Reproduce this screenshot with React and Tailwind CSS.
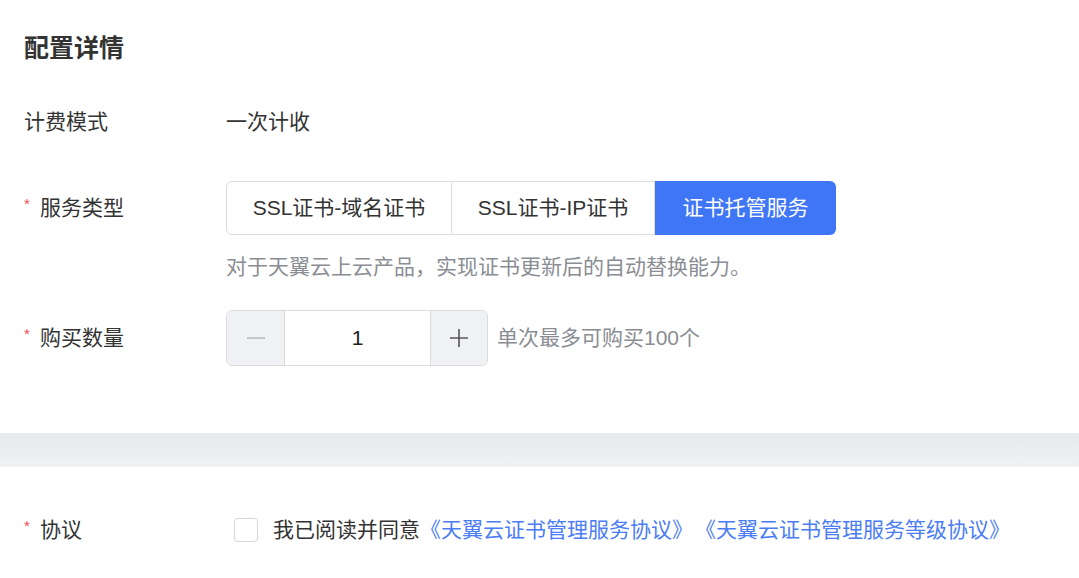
const FONT = { fontFamily: '"Liberation Sans", "Noto Sans CJK SC", sans-serif' };

const services = [
  { name: "SSL证书-域名证书", w: "w-[226px]" },
  { name: "SSL证书-IP证书", w: "w-[203px]" },
  { name: "证书托管服务", w: "w-[181px]" },
];

const Label = ({ required, children }) => (
  <div className="w-[202px] shrink-0 flex items-center text-[21px] text-[#333]">
    {required ? (
      <span className="w-4 text-[#f5484b] text-[15px] -mt-2">*</span>
    ) : null}
    <span>{children}</span>
  </div>
);

export default function App() {
  const selected = 2;

  return (
    <div className="w-[1079px] h-[578px] bg-white overflow-hidden" style={FONT}>
      <div className="px-6 pt-8">
        <h2 className="text-[25px] leading-8 font-bold text-[#333]">配置详情</h2>

        <div className="mt-[31px] h-[54px] flex items-center">
          <Label>计费模式</Label>
          <span className="text-[21px] text-[#333]">一次计收</span>
        </div>

        <div className="mt-8 h-[54px] flex items-center">
          <Label required>服务类型</Label>
          <div className="flex h-[54px]">
            {services.map((s, i) => (
              <button
                key={s.name}
                className={
                  s.w +
                  (i === selected
                    ? " h-full text-[21px] text-white bg-[#3f76f6] rounded-r-md"
                    : i === 0
                    ? " h-full text-[21px] text-[#333] bg-white border border-[#dcdcdc] rounded-l-md"
                    : " h-full text-[21px] text-[#333] bg-white border border-l-0 border-[#dcdcdc]")
                }
              >
                {s.name}
              </button>
            ))}
          </div>
        </div>

        <p className="mt-[18px] ml-[202px] text-[21px] leading-[28px] text-[#8a8d93]">
          对于天翼云上云产品，实现证书更新后的自动替换能力。
        </p>

        <div className="mt-[29px] h-[56px] flex items-center">
          <Label required>购买数量</Label>
          <div className="flex h-[56px] w-[262px] border border-[#dcdcdc] rounded-md overflow-hidden">
            <button className="w-[58px] bg-[#f0f1f4] flex items-center justify-center border-r border-[#dcdcdc]">
              <svg width="20" height="20" viewBox="0 0 20 20">
                <path d="M1 10h18" stroke="#b4b7bd" strokeWidth="1.6" />
              </svg>
            </button>
            <div className="flex-1 flex items-center justify-center text-[21px] text-[#222] bg-white">1</div>
            <button className="w-[57px] bg-[#f0f1f4] flex items-center justify-center border-l border-[#dcdcdc]">
              <svg width="20" height="20" viewBox="0 0 20 20">
                <path d="M1 10h18M10 1v18" stroke="#555" strokeWidth="1.6" />
              </svg>
            </button>
          </div>
          <span className="ml-[9px] text-[21px] text-[#8a8d93]">单次最多可购买100个</span>
        </div>
      </div>

      <div className="mt-[67px] h-[34px] bg-gradient-to-b from-[#e8e9ed] to-[#f0f1f4]" />

      <div className="px-6 mt-9 h-[54px] flex items-center">
        <Label required>协议</Label>
        <div className="flex items-center text-[21px]">
          <span className="ml-2 w-6 h-6 rounded border border-[#d6d6d6] bg-white" />
          <span className="ml-[15px] text-[#333]">我已阅读并同意</span>
          <a className="text-[#4a7cf6]">《天翼云证书管理服务协议》</a>
          <a className="ml-[2px] text-[#4a7cf6]">《天翼云证书管理服务等级协议》</a>
        </div>
      </div>
    </div>
  );
}
